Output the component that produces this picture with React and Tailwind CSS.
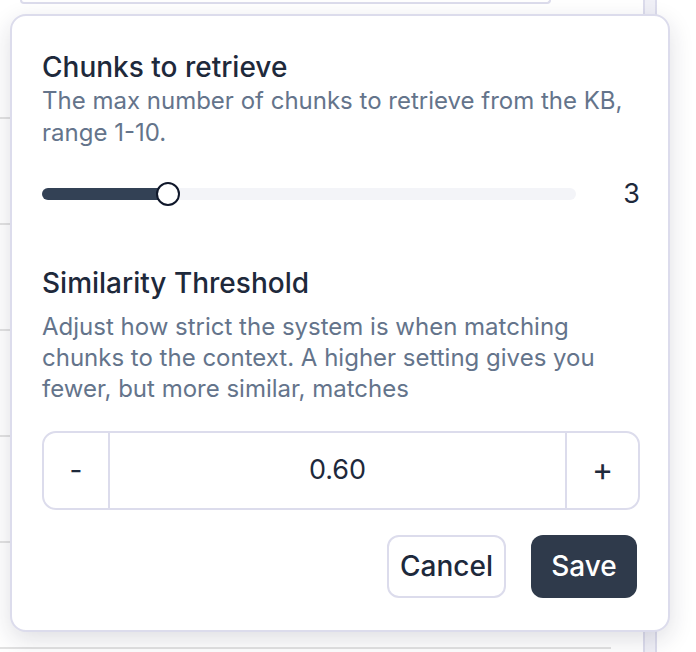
import { useState } from 'react';

export default function App() {
  const [chunks] = useState(3);
  const [threshold, setThreshold] = useState(0.6);

  const rows = [0, 1, 2, 3, 4];

  return (
    <div className="relative h-[652px] w-[696px] overflow-hidden bg-white" style={{ fontFamily: 'Inter, "Noto Sans", sans-serif' }}>
      {/* Page behind the popover */}
      <div className="flex h-full">
        <div className="w-[611px]">
          <div className="ml-[20px] h-[4px] w-[531px] rounded-b-[14px] border-x-2 border-b-2 border-[#dcdcec]" />
          <div className="h-[115px] border-b-2 border-[#e2e2e2]" />
          {rows.map((r) => (
            <div key={r} className="h-[106px] border-b-2 border-[#e2e2e2]" />
          ))}
        </div>
        <div className="ml-[32px] w-[14px] border-x-2 border-[#dcdcec] bg-[#f0f0f7]" />
      </div>

      {/* Popover */}
      <div className="absolute left-[10px] top-[14px] flex h-[618px] w-[660px] flex-col rounded-[16px] border-2 border-[#dcdcec] bg-white pl-[30px] pr-[28px] pt-[33px] shadow-[0_8px_24px_rgba(30,30,60,0.14)]">
        <h2 className="text-[28px] font-medium leading-[36px] text-[#1e293b]">Chunks to retrieve</h2>
        <p className="text-[24px] leading-[32px] text-[#64748b]">
          The max number of chunks to retrieve from the KB, range 1-10.
        </p>

        {/* Slider */}
        <div className="mt-[25px] flex items-center">
          <div className="relative h-[12px] w-[534px] rounded-full bg-[#f3f4f8]">
            <div className="h-full w-[126px] rounded-full bg-[#334155]" />
            <div className="absolute left-[114px] top-1/2 h-[24px] w-[24px] -translate-y-1/2 rounded-full border-2 border-[#0f172a] bg-white" />
          </div>
          <span className="flex-1 text-right text-[27px] text-[#1e293b]">{chunks}</span>
        </div>

        <h2 className="mt-[50px] text-[28px] font-medium leading-[36px] text-[#1e293b]">Similarity Threshold</h2>
        <p className="mt-[10px] text-[24px] leading-[31px] text-[#64748b]">
          Adjust how strict the system is when matching chunks to the context. A higher setting gives you fewer, but more similar, matches
        </p>

        {/* Number stepper */}
        <div className="mt-[27px] flex h-[79px] overflow-hidden rounded-[14px] border-2 border-[#dcdcec]">
          <button
            onClick={() => setThreshold((t) => Math.max(0, +(t - 0.05).toFixed(2)))}
            className="w-[66px] border-r-2 border-[#dcdcec] text-[28px] text-[#1e293b]"
          >
            -
          </button>
          <div className="flex flex-1 items-center justify-center text-[27px] text-[#1e293b]">
            {threshold.toFixed(2)}
          </div>
          <button
            onClick={() => setThreshold((t) => Math.min(1, +(t + 0.05).toFixed(2)))}
            className="w-[73px] border-l-2 border-[#dcdcec] text-[32px] text-[#1e293b]"
          >
            +
          </button>
        </div>

        {/* Actions */}
        <div className="mt-[25px] flex justify-end gap-[25px] pr-[3px]">
          <button className="h-[63px] w-[119px] rounded-[12px] border-2 border-[#dcdcec] bg-white text-[28px] font-medium text-[#1e293b]">
            Cancel
          </button>
          <button className="h-[63px] w-[106px] rounded-[12px] bg-[#2f3a4b] text-[28px] font-medium text-white">
            Save
          </button>
        </div>
      </div>
    </div>
  );
}
